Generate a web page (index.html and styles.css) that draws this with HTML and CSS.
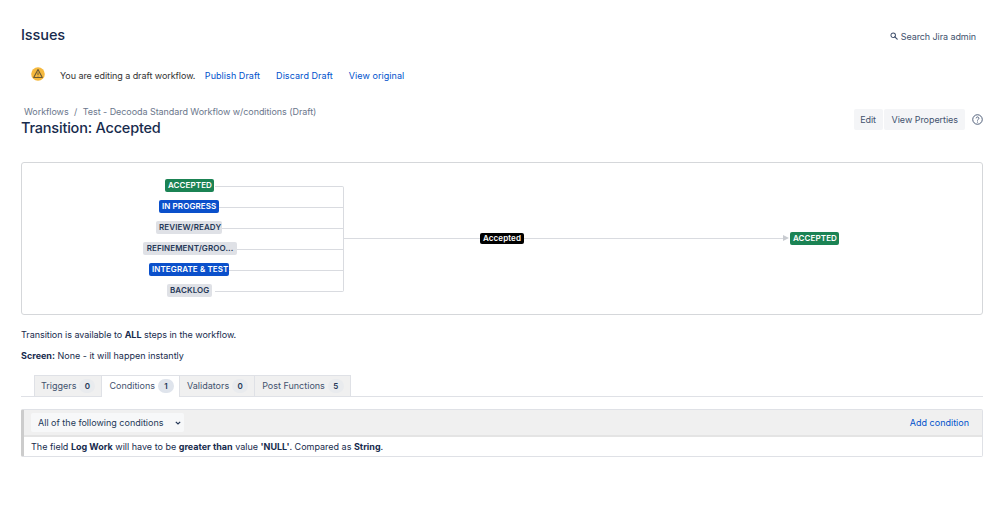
FILE: index.html
```html
<!DOCTYPE html>
<html lang="en">
<head>
<meta charset="utf-8">
<title>Transition: Accepted</title>
<link rel="stylesheet" href="styles.css">
</head>
<body>
<header class="top">
  <h1 class="issues">Issues</h1>
  <a class="search"><svg class="search-ico" viewBox="0 0 10 10" width="8" height="8"><circle cx="4" cy="4" r="2.8" fill="none" stroke="#42526e" stroke-width="1.3"/><path d="M6 6l3 3" stroke="#42526e" stroke-width="1.5" stroke-linecap="round"/></svg>Search Jira admin</a>
</header>
<div class="draft">
  <svg class="warn" viewBox="0 0 14 14" width="14" height="14"><circle cx="7" cy="7" r="6.8" fill="#f5b93f"/><path d="M7 2.600 11.300 10.500H2.700Z" fill="none" stroke="#6b5a34" stroke-width="1.100" stroke-linejoin="round"/><path d="M7 5.400v2.600M7 8.800v.6" stroke="#6b5a34" stroke-width="1"/></svg>
  <span class="draft-text">You are editing a draft workflow.</span>
  <a class="link">Publish Draft</a>
  <a class="link">Discard Draft</a>
  <a class="link">View original</a>
</div>
<section class="title-row">
  <div>
    <nav class="crumbs"><span>Workflows</span><span class="sep">/</span><span>Test - Decooda Standard Workflow w/conditions (Draft)</span></nav>
    <h2 class="transition">Transition: Accepted</h2>
  </div>
  <div class="actions">
    <button class="btn btn-edit">Edit</button>
    <button class="btn">View Properties</button>
    <svg class="help" viewBox="0 0 12 12" width="11" height="11"><circle cx="6" cy="6" r="5.200" fill="none" stroke="#42526e" stroke-width="1"/><path d="M4.500 4.700a1.500 1.500 0 1 1 2.300 1.300c-.6.400-.8.600-.8 1.100" fill="none" stroke="#42526e" stroke-width="1"/><circle cx="6" cy="8.800" r=".6" fill="#42526e"/></svg>
  </div>
</section>
<section class="diagram">
  <div class="bracket"></div>
  <div class="conn c1"></div><div class="conn c2"></div><div class="conn c3"></div><div class="conn c4"></div>
  <div class="main-line"></div>
  <div class="arrow"></div>
  <span class="lz green n1">ACCEPTED</span>
  <span class="lz blue n2">IN PROGRESS</span>
  <span class="lz grey n3">REVIEW/READY</span>
  <span class="lz grey n4">REFINEMENT/GROO...</span>
  <span class="lz blue n5">INTEGRATE &amp; TEST</span>
  <span class="lz grey n6">BACKLOG</span>
  <span class="lz black n7">Accepted</span>
  <span class="lz green n8">ACCEPTED</span>
</section>
<p class="info first-info">Transition is available to <b>ALL</b> steps in the workflow.</p>
<p class="info"><b>Screen:</b> None - it will happen instantly</p>
<div class="tabs">
  <div class="tab">Triggers <span class="count">0</span></div>
  <div class="tab active">Conditions <span class="count">1</span></div>
  <div class="tab">Validators <span class="count">0</span></div>
  <div class="tab">Post Functions <span class="count">5</span></div>
</div>
<section class="cond">
  <div class="cond-head">
    <div class="select-wrap">
      <select class="cond-select"><option>All of the following conditions</option></select>
      <svg class="chev" viewBox="0 0 6 4" width="6" height="4"><path d="M.8.8 3 3 5.200.8" fill="none" stroke="#253858" stroke-width="1.200"/></svg>
    </div>
    <a class="link add">Add condition</a>
  </div>
  <div class="cond-body">The field <b>Log Work</b> will have to be <b>greater than</b> value <b>'NULL'</b>. Compared as <b>String</b>.</div>
</section>
</body>
</html>
```
FILE: styles.css
```css
* { box-sizing: border-box; }
html, body { margin: 0; background: #fff; }
body { width: 999px; height: 530px; overflow: hidden; padding: 0 16px 0 21px; font-family: Inter, "Liberation Sans", sans-serif; font-size: 9px; color: #172b4d; }
.top { display: flex; justify-content: space-between; align-items: center; height: 26px; margin-top: 21px; padding-right: 7px; }
.issues { margin: 0; font-size: 14.5px; font-weight: 500; letter-spacing: -.1px; }
.search { display: flex; align-items: center; gap: 3px; color: #42526e; margin-top: 4px; letter-spacing: -.08px; }
.draft { display: flex; align-items: center; height: 16px; margin-top: 20px; padding-left: 10px; color: #333; letter-spacing: -.06px; }
.warn { margin-right: 15px; margin-top: -3px; }
.draft-text { margin-right: 9.500px; }
.link { color: #0052cc; margin-right: 16px; letter-spacing: .06px; }
.title-row { display: flex; justify-content: space-between; align-items: flex-start; margin-top: 24px; height: 55px; }
.crumbs { color: #6b778c; padding-left: 3px; height: 10px; line-height: 10px; letter-spacing: -.06px; }
.sep { margin: 0 5.500px; }
.transition { margin: 2px 0 0; font-size: 14.500px; font-weight: 500; line-height: 18px; letter-spacing: -.2px; }
.actions { display: flex; align-items: center; gap: 1px; margin-top: 2px; }
.btn { height: 21px; padding: 0 7px 0 8px; border: 0; border-radius: 2px; background: #f4f5f7; color: #42526e; font: 9px Inter, "Liberation Sans", sans-serif; letter-spacing: -.05px; }
.btn-edit { width: 29px; padding: 0; }
.help { margin-left: 6px; }
.diagram { position: relative; height: 153px; border: 1px solid #d5d7da; border-radius: 3px; width: 962px; }
.bracket { position: absolute; left: 193px; top: 23px; width: 129px; height: 106px; border: 1px solid #d9dbe0; border-left: 0; border-radius: 0 2px 2px 0; }
.conn { position: absolute; left: 195px; width: 127px; height: 1px; background: #d9dbe0; }
.c1 { top: 44px; } .c2 { top: 65px; } .c3 { top: 86px; } .c4 { top: 107px; }
.main-line { position: absolute; left: 322px; top: 75px; width: 440px; height: 1px; background: #d9dbe0; }
.arrow { position: absolute; left: 761px; top: 72px; border-left: 6px solid #c8cbd0; border-top: 3.500px solid transparent; border-bottom: 3.500px solid transparent; }
.lz { position: absolute; height: 13px; line-height: 13px; padding: 0 3px; border-radius: 2px; font-size: 8px; font-weight: 600; white-space: nowrap; text-align: center; letter-spacing: .1px; }
.green { background: #1b8354; color: #fff; }
.blue { background: #0b50cb; color: #fff; }
.grey { background: #dfe1e6; color: #253858; }
.black { background: #000; color: #fff; }
.n1 { left: 143px; top: 16px; width: 49px; }
.n2 { left: 137px; top: 37px; width: 60px; }
.n3 { left: 134px; top: 58px; width: 66px; }
.n4 { left: 121px; top: 79px; width: 94px; }
.n5 { left: 127px; top: 100px; width: 80px; }
.n6 { left: 145px; top: 121px; width: 45px; }
.n7 { left: 458px; top: 70px; width: 44px; height: 11px; line-height: 11px; }
.n8 { left: 768px; top: 69px; width: 49px; }
.info { margin: 0; color: #172b4d; line-height: 11px; }
.first-info { margin-top: 14px; letter-spacing: -.03px; }
.info + .info { margin-top: 10px; }
.tabs { display: flex; height: 22px; margin-top: 14px; padding-left: 13px; border-bottom: 1px solid #dfe1e6; width: 962px; }
.tab { display: flex; align-items: center; gap: 3px; height: 21px; padding: 0 6px 1px; background: #f0f0f0; border: 1px solid #dfe1e6; border-bottom: 0; color: #42526e; }
.tab + .tab { border-left: 0; padding-left: 7px; }
.tab.active { background: #fff; height: 22px; padding-bottom: 2px; padding-right: 5px; }
.count { display: inline-block; min-width: 16px; height: 14px; line-height: 14px; border-radius: 8px; background: #e9ebee; text-align: center; font-size: 8px; font-weight: 600; color: #253858; }
.tab.active .count { background: #dfe4ec; }
.cond { margin-top: 12px; width: 962px; border: 1px solid #dfe1e6; border-left: 3px solid #ccc; border-radius: 2px; }
.cond-head { display: flex; justify-content: space-between; align-items: center; height: 27px; padding: 0 0 0 7px; background: #f0f0f0; border-bottom: 2px solid #e4e4e4; }
.select-wrap { position: relative; width: 153px; height: 19px; }
.cond-select { appearance: none; width: 100%; height: 100%; padding: 0 0 0 7px; border: 0; border-radius: 2px; background: #f7f8f9; color: #253858; font: 9px Inter, "Liberation Sans", sans-serif; }
.chev { position: absolute; right: 3px; top: 8px; }
.add { margin-right: 13px; letter-spacing: 0; }
.cond-body { height: 19px; line-height: 19px; padding-left: 7px; color: #172b4d; }
```
